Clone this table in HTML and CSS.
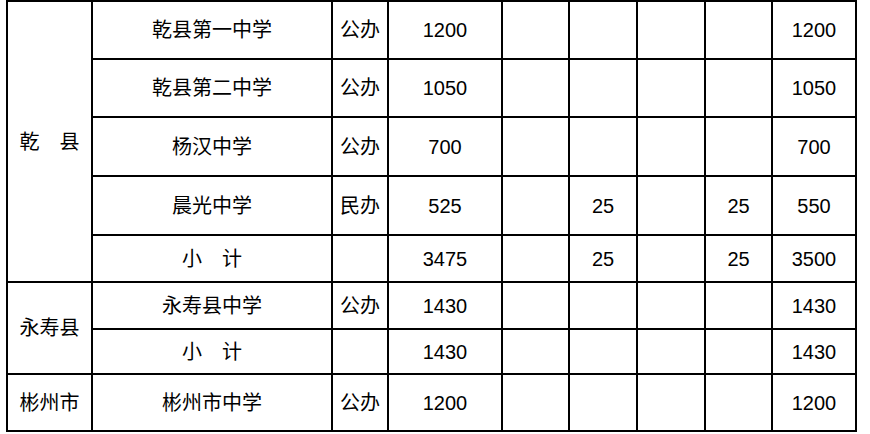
FILE: index.html
```html
<!DOCTYPE html>
<html lang="zh-CN">
<head>
<meta charset="utf-8">
<title>招生计划表</title>
<link rel="stylesheet" href="styles.css">
</head>
<body>
<table class="plan">
  <colgroup>
    <col class="c-region">
    <col class="c-school">
    <col class="c-type">
    <col class="c-num">
    <col class="c-a">
    <col class="c-b">
    <col class="c-c">
    <col class="c-d">
    <col class="c-total">
  </colgroup>
  <tbody>
    <tr class="r1">
      <td rowspan="5">乾　县</td>
      <td>乾县第一中学</td><td>公办</td><td>1200</td><td></td><td></td><td></td><td></td><td>1200</td>
    </tr>
    <tr class="r2">
      <td>乾县第二中学</td><td>公办</td><td>1050</td><td></td><td></td><td></td><td></td><td>1050</td>
    </tr>
    <tr class="r3">
      <td>杨汉中学</td><td>公办</td><td>700</td><td></td><td></td><td></td><td></td><td>700</td>
    </tr>
    <tr class="r4">
      <td>晨光中学</td><td>民办</td><td>525</td><td></td><td>25</td><td></td><td>25</td><td>550</td>
    </tr>
    <tr class="r5">
      <td>小　计</td><td></td><td>3475</td><td></td><td>25</td><td></td><td>25</td><td>3500</td>
    </tr>
    <tr class="r6">
      <td rowspan="2">永寿县</td>
      <td>永寿县中学</td><td>公办</td><td>1430</td><td></td><td></td><td></td><td></td><td>1430</td>
    </tr>
    <tr class="r7">
      <td>小　计</td><td></td><td>1430</td><td></td><td></td><td></td><td></td><td>1430</td>
    </tr>
    <tr class="r8">
      <td>彬州市</td>
      <td>彬州市中学</td><td>公办</td><td>1200</td><td></td><td></td><td></td><td></td><td>1200</td>
    </tr>
  </tbody>
</table>
</body>
</html>
```

FILE: styles.css
```css
html, body {
  margin: 0;
  padding: 0;
  background: #ffffff;
}

body {
  padding-left: 6px;
}

.plan {
  table-layout: fixed;
  border-collapse: separate;
  border-spacing: 0;
  width: 851px;
  border-top: 2px solid #000;
  border-left: 2px solid #000;
  font-family: "Liberation Sans", "Noto Sans CJK SC", sans-serif;
  font-size: 20px;
  color: #000;
}

.plan td {
  padding: 0;
  border-right: 2px solid #000;
  border-bottom: 2px solid #000;
  text-align: center;
  vertical-align: middle;
  white-space: nowrap;
  line-height: 1;
}

.c-region { width: 85px; }
.c-school { width: 240px; }
.c-type { width: 56px; }
.c-num { width: 114px; }
.c-a { width: 67px; }
.c-b { width: 68px; }
.c-c { width: 68px; }
.c-d { width: 67px; }
.c-total { width: 84px; }

.r1 { height: 58px; }
.r2 { height: 58px; }
.r3 { height: 59px; }
.r4 { height: 59px; }
.r5 { height: 47px; }
.r6 { height: 47px; }
.r7 { height: 45px; }
.r8 { height: 57px; }
```
